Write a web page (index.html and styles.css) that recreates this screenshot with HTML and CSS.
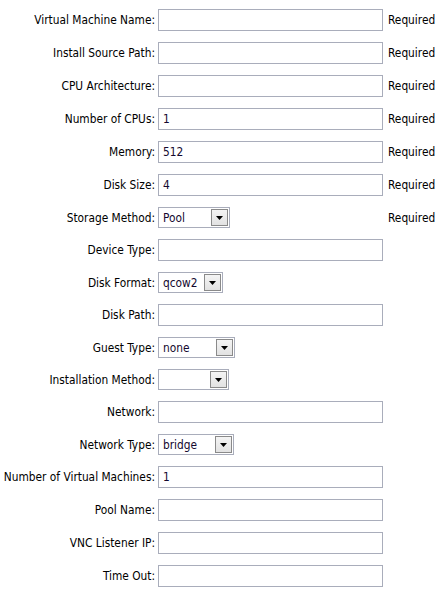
FILE: index.html
```html
<!DOCTYPE html>
<html>
<head>
<meta charset="utf-8">
<link rel="stylesheet" href="styles.css">
</head>
<body>
<div class="form">
  <div class="row"><label class="lbl">Virtual Machine Name:</label><div class="field"><div class="input"></div></div><div class="req">Required</div></div>
  <div class="row"><label class="lbl">Install Source Path:</label><div class="field"><div class="input"></div></div><div class="req">Required</div></div>
  <div class="row"><label class="lbl">CPU Architecture:</label><div class="field"><div class="input"></div></div><div class="req">Required</div></div>
  <div class="row"><label class="lbl">Number of CPUs:</label><div class="field"><div class="input">1</div></div><div class="req">Required</div></div>
  <div class="row"><label class="lbl">Memory:</label><div class="field"><div class="input">512</div></div><div class="req">Required</div></div>
  <div class="row"><label class="lbl">Disk Size:</label><div class="field"><div class="input">4</div></div><div class="req">Required</div></div>
  <div class="row sel"><label class="lbl">Storage Method:</label><div class="field"><div class="select w72"><span class="val">Pool</span><span class="btn"><svg width="7" height="4" viewBox="0 0 7 4"><path d="M0 0H7L3.5 4Z" fill="#000"/></svg></span></div></div><div class="req">Required</div></div>
  <div class="row"><label class="lbl">Device Type:</label><div class="field"><div class="input"></div></div><div class="req"></div></div>
  <div class="row sel"><label class="lbl">Disk Format:</label><div class="field"><div class="select w65"><span class="val">qcow2</span><span class="btn"><svg width="7" height="4" viewBox="0 0 7 4"><path d="M0 0H7L3.5 4Z" fill="#000"/></svg></span></div></div><div class="req"></div></div>
  <div class="row"><label class="lbl">Disk Path:</label><div class="field"><div class="input"></div></div><div class="req"></div></div>
  <div class="row sel"><label class="lbl">Guest Type:</label><div class="field"><div class="select w77"><span class="val">none</span><span class="btn"><svg width="7" height="4" viewBox="0 0 7 4"><path d="M0 0H7L3.5 4Z" fill="#000"/></svg></span></div></div><div class="req"></div></div>
  <div class="row sel"><label class="lbl">Installation Method:</label><div class="field"><div class="select w71"><span class="val"></span><span class="btn"><svg width="7" height="4" viewBox="0 0 7 4"><path d="M0 0H7L3.5 4Z" fill="#000"/></svg></span></div></div><div class="req"></div></div>
  <div class="row"><label class="lbl">Network:</label><div class="field"><div class="input"></div></div><div class="req"></div></div>
  <div class="row sel"><label class="lbl">Network Type:</label><div class="field"><div class="select w76"><span class="val">bridge</span><span class="btn"><svg width="7" height="4" viewBox="0 0 7 4"><path d="M0 0H7L3.5 4Z" fill="#000"/></svg></span></div></div><div class="req"></div></div>
  <div class="row"><label class="lbl">Number of Virtual Machines:</label><div class="field"><div class="input">1</div></div><div class="req"></div></div>
  <div class="row"><label class="lbl">Pool Name:</label><div class="field"><div class="input"></div></div><div class="req"></div></div>
  <div class="row"><label class="lbl">VNC Listener IP:</label><div class="field"><div class="input"></div></div><div class="req"></div></div>
  <div class="row"><label class="lbl">Time Out:</label><div class="field"><div class="input"></div></div><div class="req"></div></div>
</div>
</body>
</html>
```
FILE: styles.css
```css
html, body {
  margin: 0;
  padding: 0;
  background: #fff;
}
body {
  font-family: "DejaVu Sans Condensed", "DejaVu Sans", sans-serif;
  font-size: 11.8px;
  color: #000;
}
.form {
  padding-top: 4px;
}
.row {
  display: grid;
  grid-template-columns: 155px 227px auto;
  column-gap: 3px;
  align-items: center;
  padding: 5px 0 6px;
}
.lbl {
  text-align: right;
  white-space: nowrap;
}
.input {
  box-sizing: border-box;
  width: 225px;
  height: 22px;
  border: 1px solid #a9adbb;
  padding: 0 4px;
  line-height: 20px;
  color: #14082e;
}
.field {
  display: flex;
}
.select {
  box-sizing: border-box;
  height: 21px;
  border: 1px solid #a9adbb;
  display: flex;
  align-items: center;
  justify-content: space-between;
  padding: 0 1px 0 4px;
  color: #14082e;
}
.w72 { width: 72px; }
.w65 { width: 65px; }
.w77 { width: 77px; }
.w71 { width: 71px; }
.w76 { width: 76px; }
.btn {
  box-sizing: border-box;
  width: 17px;
  height: 17px;
  border: 1px solid #8a8a8a;
  background: linear-gradient(#f4f4f4, #e2e2e2);
  display: flex;
  align-items: center;
  justify-content: center;
}
.btn svg {
  display: block;
  margin-top: 1px;
}
.req {
  white-space: nowrap;
}
```
